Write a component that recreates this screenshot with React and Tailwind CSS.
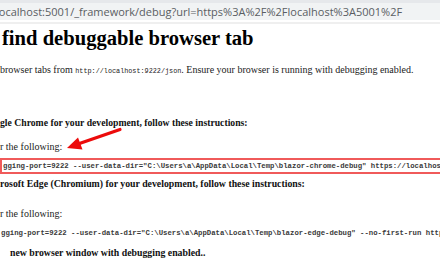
import React from "react";

const serif = { fontFamily: '"Liberation Serif", "Times New Roman", serif' };
const mono = { fontFamily: '"Liberation Mono", "Courier New", monospace' };

const Arrow = () => (
  <svg className="absolute left-0 top-0 pointer-events-none" width="440" height="264">
    <line x1="120" y1="129.5" x2="78" y2="144" stroke="#ec0b0b" strokeWidth="3.2" strokeLinecap="round" />
    <polygon points="67,148 82.5,149.5 78,137.5" fill="#ec0b0b" />
  </svg>
);

export default function App() {
  return (
    <div className="relative w-[440px] h-[264px] overflow-hidden bg-white text-black">
      {/* address bar */}
      <div className="h-[3px] bg-[#e6e8eb]" />
      <div
        className="h-[17px] bg-[#f1f3f4] text-[11px] leading-[17px] text-[#5a5e63] whitespace-nowrap -indent-[4px]"
        style={{ fontFamily: '"Open Sans", "Noto Sans", sans-serif' }}
      >
        localhost:5001/_framework/debug?url=https%3A%2F%2Flocalhost%3A5001%2F
      </div>
      <div className="h-[2px] bg-white" />
      <div className="h-[2px] bg-[#efefef]" />

      <div style={serif} className="whitespace-nowrap">
        <h1 className="h-[28px] pl-[2px] text-[20.6px] font-bold leading-[28px]">
          find debuggable browser tab
        </h1>
        <p className="mt-[10px] h-[16px] text-[10px] leading-[16px] text-[#222]">
          browser tabs from{" "}
          <span style={mono} className="text-[6.8px]">http://localhost:9222/json</span>. Ensure your
          browser is running with debugging enabled.
        </p>
        <p className="mt-[37px] h-[16px] text-[9.7px] font-bold leading-[16px] text-[#111]">
          gle Chrome for your development, follow these instructions:
        </p>
        <p className="mt-[8px] h-[16px] text-[10px] leading-[16px] text-[#222]">r the following:</p>
        <div className="mt-[3px] h-[16px] border-2 border-r-0 border-[#f05a5a] pl-[1px]">
          <code style={mono} className="block text-[7.3px] font-bold leading-[12px] text-[#3a3a3a]">
            gging-port=9222 --user-data-dir="C:\Users\a\AppData\Local\Temp\blazor-chrome-debug" https://localhost:5001/
          </code>
        </div>
        <p className="mt-[2px] h-[16px] text-[9.8px] font-bold leading-[16px] text-[#111]">
          rosoft Edge (Chromium) for your development, follow these instructions:
        </p>
        <p className="mt-[14px] h-[16px] text-[10px] leading-[16px] text-[#222]">r the following:</p>
        <div className="mt-[3px] h-[16px] pl-[1px]">
          <code style={mono} className="block text-[7.3px] font-bold leading-[16px] text-[#3a3a3a]">
            gging-port=9222 --user-data-dir="C:\Users\a\AppData\Local\Temp\blazor-edge-debug" --no-first-run https://localhost:5001/
          </code>
        </div>
        <p className="mt-[4px] h-[16px] pl-[10px] text-[9.8px] font-bold leading-[16px] text-[#111]">
          new browser window with debugging enabled..
        </p>
      </div>

      <Arrow />
    </div>
  );
}
